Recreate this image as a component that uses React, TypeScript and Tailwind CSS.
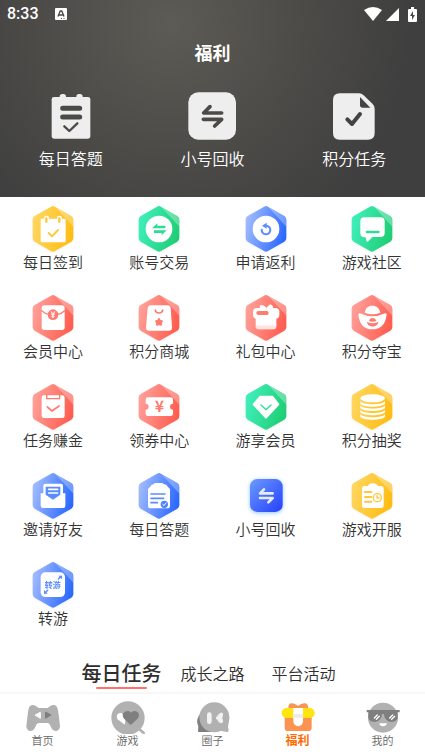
import type { ReactNode } from "react";

type Tone = "yellow" | "green" | "blue" | "red";

const tones: Record<Tone, { from: string; to: string }> = {
  yellow: { from: "#ffd65f", to: "#ffbc10" },
  green: { from: "#40efba", to: "#1ecd73" },
  blue: { from: "#a0bbff", to: "#2766ff" },
  red: { from: "#ffa099", to: "#ff5b4d" },
};

const HEX =
  "M66 5Q72 1 78 5L127 33Q133 37 133 44V99Q133 106 127 110L78 138Q72 142 66 138L17 110Q11 106 11 99V44Q11 37 17 33Z";

const Hex: React.FC<{ tone: Tone; children: ReactNode }> = ({ tone, children }) => {
  const { from, to } = tones[tone];
  return (
    <svg viewBox="0 0 144 141" className="w-12 h-[47px] overflow-visible drop-shadow-xs" aria-hidden="true">
      <defs>
        <linearGradient id={`hex-${tone}`} x1="0" y1="0.35" x2="1" y2="0.65">
          <stop offset="0" stopColor={from} />
          <stop offset="1" stopColor={to} />
        </linearGradient>
      </defs>
      <path d={HEX} fill={`url(#hex-${tone})`} />
      <path d="M79 6L127 33Q133 37 133 44V65Z" fill="#fff" opacity="0.3" />
      {children}
    </svg>
  );
};

const line = { fill: "none", strokeLinecap: "round", strokeLinejoin: "round" } as const;

const SignIn = () => (
  <Hex tone="yellow">
    <rect x="35" y="41" width="75" height="71" rx="3" fill="#fff" />
    <rect x="45" y="32" width="15" height="23" rx="7" fill="#fff" />
    <rect x="84" y="32" width="15" height="23" rx="7" fill="#fff" />
    <path d="M52 40V50M91 40V50" {...line} stroke="#ffc73a" strokeWidth="7" />
    <path d="M59 84L69 94L87 75" {...line} stroke="#ffc73a" strokeWidth="6" />
  </Hex>
);

const Trade = () => (
  <Hex tone="green">
    <circle cx="72" cy="72" r="40" fill="#fff" />
    <path d="M51 70L67 55V62H91V70ZM57 76H95L80 91V84H57Z" fill="#2edc98" />
  </Hex>
);

const Rebate = () => (
  <Hex tone="blue">
    <circle cx="72" cy="72" r="40" fill="#fff" />
    <path d="M59 74A13 13 0 1 0 72 62" {...line} stroke="#5b8cff" strokeWidth="6" />
    <path d="M74 53V71L60 62Z" fill="#5b8cff" />
  </Hex>
);

const Community = () => (
  <Hex tone="green">
    <path d="M49 37H98Q110 37 110 49V84Q110 96 98 96H73L61 109Q57 112 55 107L53 97Q37 98 37 84V49Q37 37 49 37Z" fill="#fff" />
    <path d="M57 81H91" {...line} stroke="#2edc98" strokeWidth="8" />
  </Hex>
);

const Member = () => (
  <Hex tone="red">
    <rect x="38" y="34" width="69" height="74" rx="8" fill="#fff" />
    <path d="M38 50Q46 59 60 61H85Q98 59 107 50" {...line} stroke="#ff7a70" strokeWidth="4" />
    <circle cx="72" cy="62" r="16" fill="#ff7a70" />
    <text x="72" y="71" textAnchor="middle" fontSize="25" fontWeight="700" fill="#fff">
      ¥
    </text>
  </Hex>
);

const Mall = () => (
  <Hex tone="red">
    <path d="M46 34H99Q106 34 107 42L111 101Q111 110 102 110H42Q33 110 33 101L38 42Q39 34 46 34Z" fill="#fff" />
    <path d="M61 48C62 60 82 60 83 48" {...line} stroke="#ff7a70" strokeWidth="5" />
    <path d="M72 73L76 79L83 81L79 87L79 94L72 92L65 94L65 87L61 81L68 79Z" {...line} fill="#ff7a70" stroke="#ff7a70" strokeWidth="3" />
  </Hex>
);

const Gift = () => (
  <Hex tone="red">
    <path d="M55 45V35L66 36L73 43L84 32L91 36V46Z" {...line} fill="#fff" stroke="#fff" strokeWidth="3" />
    <rect x="33" y="42" width="79" height="32" rx="11" fill="#fff" />
    <rect x="41" y="58" width="62" height="48" rx="9" fill="#fff" />
    <rect x="41" y="94" width="62" height="12" rx="6" fill="#ffc9c5" opacity="0.5" />
    <rect x="43" y="51" width="37" height="12" rx="6" fill="#ff7a70" />
  </Hex>
);

const Ingot = () => (
  <Hex tone="red">
    <path d="M50 56C52 42 61 35 73 35S94 42 97 56Q73 66 50 56Z" fill="#fff" />
    <path d="M31 62Q32 55 40 59Q73 75 107 59Q116 55 116 62C112 93 96 106 73 106S35 93 31 62Z" fill="#fff" />
    <path d="M63 81C65 69 82 69 85 81Q74 86 63 81Z" fill="#ff7a70" />
    <path d="M57 83Q74 92 91 83C90 102 58 102 57 83Z" fill="#ff7a70" />
  </Hex>
);

const Earn = () => (
  <Hex tone="red">
    <rect x="38" y="37" width="69" height="68" rx="7" fill="#fff" />
    <path d="M53 36V47H92V36" {...line} stroke="#ff7a70" strokeWidth="4" />
    <path d="M55 72L69 84L90 69" {...line} stroke="#ff7a70" strokeWidth="5" />
  </Hex>
);

const Coupon = () => (
  <Hex tone="red">
    <path d="M39 43H107Q114 43 114 50V62A9 9 0 0 0 114 80V92Q114 99 107 99H39Q32 99 32 92V80A9 9 0 0 0 32 62V50Q32 43 39 43Z" fill="#fff" />
    <text x="73" y="88" textAnchor="middle" fontSize="47" fontWeight="700" fill="#ff7a70">
      ¥
    </text>
  </Hex>
);

const Diamond = () => (
  <Hex tone="green">
    <path d="M55 41H91L109 64L72 104L35 64Z" {...line} fill="#fff" stroke="#fff" strokeWidth="6" />
    <path d="M57 66L72 80L87 66" {...line} stroke="#2edc98" strokeWidth="4" />
  </Hex>
);

const Coins = () => (
  <Hex tone="yellow">
    <ellipse cx="74" cy="46" rx="37" ry="12" fill="#fff" />
    {[54, 67, 80, 93].map((y) => (
      <path key={y} d={`M37 ${y}C44 ${y + 13} 104 ${y + 13} 111 ${y}V${y + 8}C104 ${y + 20} 44 ${y + 20} 37 ${y + 8}Z`} fill="#fff" />
    ))}
  </Hex>
);

const Invite = () => (
  <Hex tone="blue">
    <path d="M35 64H43V41Q43 35 49 35H96Q102 35 102 41V64H109V101Q109 108 102 108H42Q35 108 35 101Z" fill="#fff" />
    <path d="M50 44H94V68L72 83L50 68Z" fill="#5b8cff" />
    <path d="M59 52H86M59 63H86" {...line} stroke="#fff" strokeWidth="5" />
  </Hex>
);

const Quiz = () => (
  <Hex tone="blue">
    <path d="M39 51L47 43Q48 37 56 37L60 33H82L87 37Q96 37 97 43L105 51V101Q105 109 97 109H47Q39 109 39 101Z" fill="#fff" />
    <path d="M48 66H90M48 79H86M48 92H67" {...line} stroke="#5b8cff" strokeWidth="5" />
    <circle cx="88" cy="97" r="11" fill="#4d82ff" />
    <path d="M83 97L87 101L93 93" {...line} stroke="#fff" strokeWidth="3" />
  </Hex>
);

const Recycle = () => (
  <svg viewBox="0 0 144 141" className="w-12 h-[47px] overflow-visible drop-shadow-sm drop-shadow-blue-300" aria-hidden="true">
    <defs>
      <linearGradient id="recycle" x1="0" y1="0" x2="1" y2="1">
        <stop offset="0" stopColor="#6a9bff" />
        <stop offset="1" stopColor="#2640fb" />
      </linearGradient>
    </defs>
    <rect x="24" y="21" width="98" height="99" rx="22" fill="url(#recycle)" />
    <path d="M92 64H54L66 52M54 78H92L79 91" {...line} stroke="#e6ebff" strokeWidth="8" />
  </svg>
);

const Launch = () => (
  <Hex tone="yellow">
    <path d="M50 42H60Q62 34 74 34T90 42H99Q107 42 107 50V100Q107 108 99 108H50Q42 108 42 100V50Q42 42 50 42Z" fill="#fff" />
    <path d="M51 60H70M51 75H70M51 89H70" {...line} stroke="#ffc73a" strokeWidth="6" />
    <circle cx="88" cy="77" r="12" fill="none" stroke="#ffc73a" strokeWidth="4" />
    <path d="M87 71V78H93" {...line} stroke="#ffc73a" strokeWidth="4" />
  </Hex>
);

const Transfer = () => (
  <Hex tone="blue">
    <rect x="35" y="34" width="73" height="74" rx="14" fill="#fff" />
    <text x="71" y="81" textAnchor="middle" fontSize="24" fontWeight="700" fill="#5b8cff">
      转游
    </text>
    <path d="M88 54L96 46M56 88L48 96" {...line} stroke="#5b8cff" strokeWidth="4" />
    <path d="M88 44H99V55ZM45 87V98H56Z" fill="#5b8cff" />
  </Hex>
);

const services = [
  { label: "每日签到", icon: <SignIn /> },
  { label: "账号交易", icon: <Trade /> },
  { label: "申请返利", icon: <Rebate /> },
  { label: "游戏社区", icon: <Community /> },
  { label: "会员中心", icon: <Member /> },
  { label: "积分商城", icon: <Mall /> },
  { label: "礼包中心", icon: <Gift /> },
  { label: "积分夺宝", icon: <Ingot /> },
  { label: "任务赚金", icon: <Earn /> },
  { label: "领券中心", icon: <Coupon /> },
  { label: "游享会员", icon: <Diamond /> },
  { label: "积分抽奖", icon: <Coins /> },
  { label: "邀请好友", icon: <Invite /> },
  { label: "每日答题", icon: <Quiz /> },
  { label: "小号回收", icon: <Recycle /> },
  { label: "游戏开服", icon: <Launch /> },
  { label: "转游", icon: <Transfer /> },
];

const shortcuts = [
  {
    label: "每日答题",
    icon: (
      <>
        <rect x="38" y="6" width="19" height="20" rx="8" />
        <rect x="88" y="6" width="19" height="20" rx="8" />
        <rect x="14" y="15" width="116" height="125" rx="7" />
        <path d="M47 49H98M47 75H98" {...line} stroke="#4b4a47" strokeWidth="15" />
        <path d="M52 103L67 117L91 94" {...line} stroke="#4b4a47" strokeWidth="7" />
      </>
    ),
  },
  {
    label: "小号回收",
    icon: (
      <>
        <rect x="1" y="1" width="143" height="142" rx="30" />
        <path d="M101 63H47L66 44M46 82H101L80 102" {...line} stroke="#4b4a47" strokeWidth="11" />
      </>
    ),
  },
  {
    label: "积分任务",
    icon: (
      <>
        <path d="M29 4H87Q95 4 101 10L128 36Q134 42 134 50V123Q134 143 114 143H29Q9 143 9 123V24Q9 4 29 4Z" />
        <path d="M90 15L121 47H98Q90 47 90 39Z" fill="#444342" />
        <path d="M52 82L66 96L90 66" {...line} stroke="#444342" strokeWidth="12" />
      </>
    ),
  },
];

const tabs = ["每日任务", "成长之路", "平台活动"];

const nav = [
  {
    label: "首页",
    icon: (
      <>
        <path
          d="M21 15C33 13 37 24 43 24H66C72 24 76 13 88 15C98 17 99 30 101 44L105 78C105 92 90 98 82 88C76 80 76 69 66 69H43C33 69 33 80 27 88C19 98 4 92 4 78L8 44C10 30 11 17 21 15Z"
          fill="#b1b1b1"
        />
        <path d="M31 45L46 37V54Z" {...line} fill="#fff" stroke="#fff" strokeWidth="3" />
        <path d="M62 37L77 45L62 54Z" {...line} fill="#7f7f7f" stroke="#7f7f7f" strokeWidth="4" />
      </>
    ),
  },
  {
    label: "游戏",
    icon: (
      <>
        <circle cx="54" cy="54" r="50" fill="#b1b1b1" />
        <path d="M80 80L101 99" {...line} stroke="#b1b1b1" strokeWidth="8" />
        <path d="M44 74L23 58C16 48 24 36 35 40L48 50Z" fill="#fff" />
        <path d="M62 75L43 57C32 45 42 32 54 33Q60 34 63 38Q67 33 73 33C86 33 92 46 82 57Z" fill="#7f7f7f" />
      </>
    ),
  },
  {
    label: "圈子",
    icon: (
      <>
        <path d="M18 40C6 52 4 66 10 78L9 96H60Z" fill="#7f7f7f" />
        <circle cx="58" cy="52" r="45" fill="#b1b1b1" />
        <path d="M103 52L99 80L101 91Q101 97 95 96L70 91Z" fill="#b1b1b1" />
        <rect x="36" y="37" width="14" height="35" rx="7" fill="#f2f2f2" />
        <path d="M64 53L74 41Q82 36 83 42Q78 54 83 65Q82 71 74 67Z" {...line} fill="#f2f2f2" stroke="#f2f2f2" strokeWidth="3" />
      </>
    ),
  },
  {
    label: "福利",
    active: true,
    icon: (
      <>
        <path d="M26 26C22 8 38 4 54 18C70 4 88 8 84 26Z" fill="#fb9450" />
        <path d="M14 48H95V83Q95 93 85 93H24Q14 93 14 83Z" fill="#fb9450" />
        <rect x="5" y="24" width="99" height="30" rx="15" fill="#ffe40f" />
        <path d="M40 24H69V64A14 14 0 0 1 40 64Z" fill="#fff" />
        <path d="M40 42H69V54H40Z" fill="#ececec" />
      </>
    ),
  },
  {
    label: "我的",
    icon: (
      <>
        <circle cx="54" cy="53" r="45" fill="#b1b1b1" />
        <path d="M5 30H104V37H98V50C98 72 58 72 57 42H51C50 72 10 72 10 50V37H5Z" fill="#7f7f7f" />
        <path d="M28 54L37 45M34 58L43 49M74 54L83 45M80 58L89 49" {...line} stroke="#fff" strokeWidth="4" />
        <path d="M43 70H66Q64 79 54 79T43 70Z" fill="#fff" />
      </>
    ),
  },
];

const StatusBar: React.FC = () => (
  <div className="flex h-7 items-center justify-between pr-2 pl-[7px]">
    <div className="flex items-center gap-4">
      <span className="font-[Roboto] text-base leading-7 font-medium">8:33</span>
      <svg viewBox="0 0 12 12" className="size-3" aria-hidden="true">
        <rect width="12" height="12" rx="1" fill="#fff" />
        <path d="M3 8.500L5.200 3H6.800L9 8.500M4 7H8" fill="none" stroke="#4d4c49" strokeWidth="1.400" />
        <path d="M6 10.500H7M8.500 10.500H9.500" stroke="#4d4c49" strokeWidth="1" />
      </svg>
    </div>
    <div className="flex items-center" aria-hidden="true">
      <svg viewBox="0 0 18 14" className="h-3.5 w-[18px]">
        <path d="M0 3Q9 -3 18 3L9 14Z" fill="#fff" />
      </svg>
      <svg viewBox="0 0 13 14" className="ml-1 h-3.5 w-[13px]">
        <path d="M13 1V14H0Z" fill="#fff" />
      </svg>
      <svg viewBox="0 0 9 15" className="ml-[9px] h-[15px] w-[9px]">
        <path d="M3 0H6V2H8Q9 2 9 3V14Q9 15 8 15H1Q0 15 0 14V3Q0 2 1 2H3Z" fill="#fff" />
        <path d="M5 4L2 9H4V13L7 8H5Z" fill="#4a4a48" />
      </svg>
    </div>
  </div>
);

export default function App() {
  return (
    <div className="flex min-h-screen flex-col bg-white font-['Noto_Sans_CJK_SC',sans-serif] text-[#333333]">
      <header className="bg-[radial-gradient(circle_at_40%_12%,#5c5b55_0%,#4b4a47_140px,#3f3f3f_240px)] pb-[27px] text-white">
        <StatusBar />
        <h1 className="pt-2.5 text-center text-lg leading-7 font-bold">福利</h1>
        <div className="grid grid-cols-3 pt-[26px]">
          {shortcuts.map((item) => (
            <button key={item.label} type="button" className="flex flex-col items-center gap-1.5">
              <svg viewBox="0 0 144 144" className="size-12 fill-[#eeeeee]" aria-hidden="true">
                {item.icon}
              </svg>
              <span className="text-base leading-6 font-[350]">{item.label}</span>
            </button>
          ))}
        </div>
      </header>

      <main>
        <div className="grid grid-cols-4 gap-y-[22px] pt-2">
          {services.map((item) => (
            <button key={item.label} type="button" className="flex flex-col items-center">
              {item.icon}
              <span className="text-[15px] leading-5 font-[350]">{item.label}</span>
            </button>
          ))}
        </div>
        <div role="tablist" className="flex justify-center pt-[31px] text-[#2e2e2e]">
          {tabs.map((tab, i) => (
            <button
              key={tab}
              type="button"
              role="tab"
              aria-selected={i === 0}
              className={
                i === 0
                  ? "flex w-[91px] flex-col items-center text-xl leading-7 font-medium"
                  : "w-[91px] pb-0.5 text-base leading-7 font-[350]"
              }
            >
              {tab}
              {i === 0 && <span className="h-0.5 w-[51px] rounded-full bg-[#ff7268]" />}
            </button>
          ))}
        </div>
      </main>

      <nav className="mt-auto grid grid-cols-5 border-t-2 border-[#f7f7f7] bg-white pt-1.5 pb-[9px]">
        {nav.map((item) => (
          <a key={item.label} href="#" className="flex flex-col items-center">
            <svg viewBox="0 0 108 102" className="h-[34px] w-9" aria-hidden="true">
              {item.icon}
            </svg>
            <span className={item.active ? "text-xs leading-3 font-bold text-[#ff6a00]" : "text-[11px] leading-3 font-[350] text-[#666666]"}>
              {item.label}
            </span>
          </a>
        ))}
      </nav>
    </div>
  );
}
